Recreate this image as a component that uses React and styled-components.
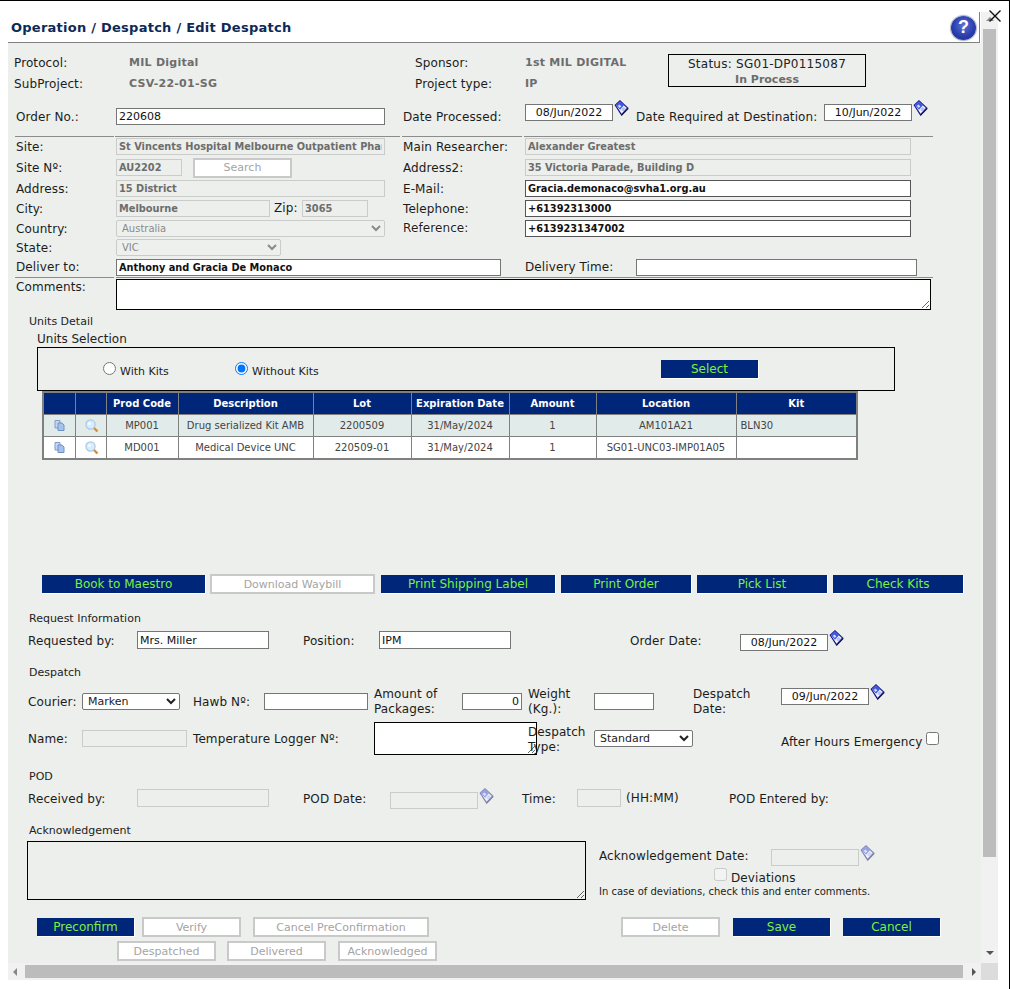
import React from 'react';
import styled, { createGlobalStyle } from 'styled-components';

const GlobalStyle = createGlobalStyle`
  html, body {
    margin: 0;
    padding: 0;
    background: #fff;
  }
  body {
    font-family: "DejaVu Sans", Verdana, sans-serif;
    font-size: 12px;
    color: #1c1c1c;
  }
`;

const NAVY = '#00267a';
const PANEL = '#ecefeb';

const Page = styled.div`
  position: relative;
  box-sizing: border-box;
  width: 1010px;
  height: 989px;
  padding-left: 8px;
  border-top: 1px solid #000;
  border-right: 1px solid #000;
  background: #fff;
  overflow: hidden;
`;

const Frame = styled.div`
  display: grid;
  grid-template-columns: 973px 17px;
  grid-template-rows: 962px 17px;
`;

const Main = styled.div`
  display: flex;
  flex-direction: column;
`;

const Header = styled.header`
  box-sizing: border-box;
  display: flex;
  align-items: center;
  justify-content: space-between;
  position: relative;
  width: 972px;
  height: 42px;
  padding: 12px 4px 0 3px;
  border-bottom: 1px solid #808080;
  &::after {
    content: '';
    position: absolute;
    right: 0;
    top: 11px;
    bottom: 0;
    width: 1px;
    background: #808080;
  }
`;

const Title = styled.h1`
  margin: 0;
  font-size: 13px;
  font-weight: bold;
  letter-spacing: 0.25px;
  color: #0c2a58;
`;

const HelpBadge = styled.div`
  width: 25px;
  height: 24px;
  border-radius: 50%;
  display: flex;
  align-items: center;
  justify-content: center;
  font: bold 18px "Liberation Sans", sans-serif;
  color: #fff;
  background: radial-gradient(circle at 50% 40%, #5c70d8 0%, #2a3fae 55%, #1c2a80 100%);
  box-shadow: 0 0 1px 1px #a9b0c6;
`;

const CloseMark = styled.svg`
  position: absolute;
  top: 9px;
  right: 7px;
  width: 14px;
  height: 12px;
`;

const Panel = styled.main`
  flex: 1;
  background: ${PANEL};
  padding-top: 9px;
`;

const Head = styled.div`
  display: flex;
  align-items: flex-start;
  height: 42px;
`;

const HeadInfo = styled.div`
  width: 660px;
`;

const InfoRow = styled.div`
  display: flex;
  align-items: center;
  height: 21px;
  padding-left: 6px;
`;

const Label = styled.span`
  flex: none;
  width: ${(p) => p.$w || 'auto'}${(p) => (p.$w ? 'px' : '')};
  margin-left: ${(p) => p.$ml || 0}px;
  margin-top: ${(p) => p.$mt || 0}px;
  padding-top: ${(p) => (p.$glow || p.$flat ? 0 : 2)}px;
  font-size: 12px;
  line-height: 15px;
  letter-spacing: 0.1px;
  color: #1c1c1c;
  white-space: ${(p) => (p.$wrap ? 'normal' : 'nowrap')};
  text-shadow: ${(p) => (p.$glow ? '0 0 2px #fff, 0 0 2px #fff, 0 0 1px #fff' : 'none')};
  position: relative;
`;

const Value = styled.span`
  flex: none;
  width: ${(p) => p.$w || 0}px;
  font-size: 11px;
  font-weight: bold;
  letter-spacing: 0.25px;
  color: #6d6d6d;
  white-space: nowrap;
`;

const StatusBox = styled.div`
  box-sizing: border-box;
  width: 198px;
  height: 33px;
  margin-top: 2px;
  padding-top: 1px;
  border: 1px solid #000;
  text-align: center;
  font-size: 12px;
  line-height: 16px;
  letter-spacing: 0.25px;
  color: #222;
  strong {
    display: block;
    margin-top: 1px;
    font-size: 11px;
    line-height: 14px;
    letter-spacing: 0;
    color: #6d6d6d;
  }
`;

const Row = styled.div`
  display: flex;
  align-items: ${(p) => p.$align || 'center'};
  height: ${(p) => p.$h}px;
  margin-top: ${(p) => p.$mt || 0}px;
  padding-left: ${(p) => p.$pl ?? 8}px;
`;

const Cell = styled.div`
  flex: none;
  display: flex;
  align-items: center;
  width: ${(p) => p.$w}px;
`;

const RuleRow = styled.div`
  display: flex;
  margin-top: ${(p) => p.$mt || 0}px;
  padding-left: 7px;
`;

const RuleSeg = styled.div`
  width: ${(p) => p.$w}px;
  margin-left: ${(p) => p.$ml || 0}px;
  height: 1px;
  background: #8c8c8c;
`;

const TextBox = styled.input`
  flex: none;
  box-sizing: border-box;
  width: ${(p) => p.$w}px;
  height: ${(p) => p.$h || 17}px;
  margin: 0 0 0 ${(p) => p.$ml || 0}px;
  padding: 0 2px;
  border: 1px solid ${(p) => p.$edge || '#767676'};
  border-radius: 0;
  outline: none;
  background: #fff;
  font-family: "DejaVu Sans", Verdana, sans-serif;
  font-size: ${(p) => (p.$bold ? 9.8 : 11)}px;
  font-weight: ${(p) => (p.$bold ? 'bold' : 'normal')};
  text-align: ${(p) => p.$align || 'left'};
  color: #111;
  &:disabled {
    background: ${PANEL};
    border-color: #c9ccc8;
    color: #6d6d6d;
  }
`;

const Picker = styled.select`
  flex: none;
  box-sizing: border-box;
  width: ${(p) => p.$w}px;
  height: 17px;
  margin: 0;
  padding: 0 0 0 1px;
  border: 1px solid #767676;
  border-radius: 2px;
  background-color: #fff;
  font-family: "DejaVu Sans", Verdana, sans-serif;
  font-size: 11px;
  color: #222;
  &:disabled {
    background-color: #eef0ed;
    border-color: #c9ccc8;
    font-size: 10px;
    color: #8a8a8a;
    opacity: 1;
  }
`;

const MemoBox = styled.textarea`
  flex: none;
  box-sizing: border-box;
  display: block;
  width: ${(p) => p.$w}px;
  height: ${(p) => p.$h}px;
  margin: ${(p) => p.$mt || 0}px ${(p) => p.$mr || 0}px 0 ${(p) => p.$ml || 0}px;
  padding: 0;
  border: 1px solid #000;
  border-radius: 0;
  outline: none;
  background: #fff;
  &:disabled {
    background: ${PANEL};
  }
`;

const DatePick = styled.div`
  flex: none;
  display: flex;
  align-items: flex-end;
  height: 21px;
  margin-bottom: ${(p) => p.$up || 0}px;
`;

const CalendarIcon = styled.svg`
  align-self: flex-start;
  width: 15px;
  height: 16px;
  margin-left: 1px;
  opacity: ${(p) => (p.$off ? 0.5 : 1)};
`;

const SectionTitle = styled.div`
  margin-top: ${(p) => p.$mt || 0}px;
  padding-left: 21px;
  font-size: 11px;
  line-height: 14px;
  color: #222;
`;

const Legend = styled.div`
  margin: 2px 0 0 29px;
  font-size: 12px;
  line-height: 16px;
  color: #222;
`;

const SelectionBox = styled.div`
  box-sizing: border-box;
  display: flex;
  align-items: center;
  width: 858px;
  height: 44px;
  margin-left: 29px;
  padding-left: 65px;
  border: 1px solid #000;
`;

const RadioWrap = styled.label`
  display: flex;
  align-items: flex-start;
  width: ${(p) => p.$w}px;
  font-size: 11px;
  color: #222;
  input {
    margin: 3px 4px 0 0;
    width: 13px;
    height: 13px;
  }
  span {
    margin-top: 6px;
    line-height: 14px;
  }
`;

const NavyButton = styled.button`
  flex: none;
  box-sizing: border-box;
  width: ${(p) => p.$w}px;
  height: 18px;
  margin: 0 0 0 ${(p) => p.$ml || 0}px;
  padding: 0;
  border: none;
  border-radius: 0;
  background: ${NAVY};
  box-shadow: 1px 1px 0 #fff;
  font-family: "DejaVu Sans", Verdana, sans-serif;
  font-size: 12px;
  color: #7df03c;
`;

const OffButton = styled.button`
  flex: none;
  box-sizing: border-box;
  width: ${(p) => p.$w}px;
  height: 20px;
  margin: 0 0 0 ${(p) => p.$ml || 0}px;
  padding: 0;
  border: 2px solid #c9c9c9;
  border-radius: 0;
  background: #fff;
  font-family: "DejaVu Sans", Verdana, sans-serif;
  font-size: 11px;
  color: #a4a4a4;
`;

const UnitsTable = styled.table`
  box-sizing: border-box;
  table-layout: fixed;
  width: 814px;
  margin: 0 0 0 34px;
  border-collapse: collapse;
  border: 2px solid #808080;
`;

const Th = styled.th`
  height: 21px;
  padding: 0;
  border: 1px solid #808080;
  background: ${NAVY};
  font-size: 10px;
  font-weight: bold;
  color: #fff;
`;

const Td = styled.td`
  height: 21px;
  padding: 0 ${(p) => (p.$left ? '0 0 4px' : '0')};
  border: 1px solid #808080;
  background: ${(p) => (p.$odd ? '#e1ecea' : '#fff')};
  font-size: 10px;
  color: #444;
  text-align: ${(p) => (p.$left ? 'left' : 'center')};
  svg {
    display: inline-block;
    vertical-align: middle;
  }
`;

const LensSvg = styled.svg`
  margin-left: 3px;
`;

const GapCol = styled.col`
  width: ${(p) => p.$w}px;
`;

const AckSide = styled.div`
  flex: none;
  margin-left: 13px;
  display: flex;
  flex-direction: column;
`;

const SmallNote = styled.div`
  height: 14px;
  font-size: 10px;
  line-height: 14px;
  color: #222;
  white-space: nowrap;
`;

const TickBox = styled.input`
  flex: none;
  width: 13px;
  height: 13px;
  margin: ${(p) => p.$mt || 0}px 4px 0 0;
`;

const VScroll = styled.div`
  display: flex;
  flex-direction: column;
  align-items: center;
  margin-top: 11px;
  background: #f1f1f1;
`;

const HScroll = styled.div`
  display: flex;
  align-items: center;
  background: #f1f1f1;
`;

const Corner = styled.div`
  background: #dcdcdc;
`;

const VThumb = styled.div`
  width: 13px;
  height: 828px;
  background: #bcbcbc;
`;

const HThumb = styled.div`
  width: 938px;
  height: 13px;
  margin: 0 9px 0 8px;
  background: #bcbcbc;
`;

const Arrow = styled.i`
  display: block;
  width: 0;
  height: 0;
  border-style: solid;
  border-color: transparent;
  border-width: 4px;
  ${(p) => p.$dir === 'up' && 'border-top-width: 0; border-bottom-color: #888; margin: 5px 0 8px;'}
  ${(p) => p.$dir === 'down' && 'border-bottom-width: 0; border-top-color: #555; margin-top: 94px;'}
  ${(p) => p.$dir === 'left' && 'border-left-width: 0; border-right-color: #888; margin-left: 5px;'}
  ${(p) => p.$dir === 'right' && 'border-right-width: 0; border-left-color: #555;'}
`;

function Calendar({ off }) {
  return (
    <CalendarIcon viewBox="0 0 15 16" $off={off}>
      <path d="M6 0 L14.5 8 L7.5 16 L0.5 5 Z" fill="#16168c" />
      <path d="M6 1.6 L12.8 7.9 L7.6 13.8 L2 5.2 Z" fill="#f2f6ff" />
      <path d="M6 1.6 L10 5.3 L6 9.8 L2 5.2 Z" fill="#3d55e4" />
      <path d="M5.2 4.4 L7.4 6.2 L5.8 8 L3.8 5.9 Z" fill="#cfe0ff" />
      <path d="M7.6 9.8 L10.4 7.2 M8.6 11 L11.2 8.2" stroke="#6d84f0" strokeWidth="0.9" />
      <path d="M7.6 14.4 L14.2 7.8 L14.5 9 L7.6 16 Z" fill="#1a1a3a" />
    </CalendarIcon>
  );
}

function CopyIcon() {
  return (
    <svg width="11" height="11" viewBox="0 0 11 11">
      <path d="M1 0.5 H6 V8 H1 Z" fill="#c6d6ee" stroke="#7f9ccc" />
      <path d="M4 3 H8 L10 5 V10.5 H4 Z" fill="#a6c2ec" stroke="#6f90c6" />
    </svg>
  );
}

function LensIcon() {
  return (
    <LensSvg width="14" height="14" viewBox="0 0 14 14">
      <path d="M8.5 8.5 L12.5 12.5" stroke="#e08a2c" strokeWidth="2.4" />
      <circle cx="5.5" cy="5.5" r="4.6" fill="#d8ecfb" stroke="#a9c9e6" strokeWidth="1.2" />
      <circle cx="4.5" cy="4.5" r="1.6" fill="#f6fbff" />
    </LensSvg>
  );
}

const DateInput = ({ value, off }) => (
  <>
    <TextBox $w={88} $align="center" defaultValue={value} disabled={off} />
    <Calendar off={off} />
  </>
);

const units = [
  { code: 'MP001', desc: 'Drug serialized Kit AMB', lot: '2200509', exp: '31/May/2024', qty: '1', loc: 'AM101A21', kit: 'BLN30' },
  { code: 'MD001', desc: 'Medical Device UNC', lot: '220509-01', exp: '31/May/2024', qty: '1', loc: 'SG01-UNC03-IMP01A05', kit: '' },
];

const columns = [32, 31, 72, 135, 98, 98, 87, 140, 121];

export default function App() {
  return (
    <Page>
      <GlobalStyle />
      <Frame>
        <Main>
          <Header>
            <Title>Operation / Despatch / Edit Despatch</Title>
            <HelpBadge>?</HelpBadge>
          </Header>
          <Panel>
            <Head>
              <HeadInfo>
                <InfoRow>
                  <Label $w={115}>Protocol:</Label>
                  <Value $w={286}>MIL Digital</Value>
                  <Label $w={110}>Sponsor:</Label>
                  <Value $w={143}>1st MIL DIGITAL</Value>
                </InfoRow>
                <InfoRow>
                  <Label $w={115}>SubProject:</Label>
                  <Value $w={286}>CSV-22-01-SG</Value>
                  <Label $w={110}>Project type:</Label>
                  <Value $w={143}>IP</Value>
                </InfoRow>
              </HeadInfo>
              <StatusBox>
                Status: SG01-DP0115087
                <strong>In Process</strong>
              </StatusBox>
            </Head>

            <Row $h={17} $mt={14}>
              <Label $w={100}>Order No.:</Label>
              <TextBox $w={269} defaultValue="220608" />
              <Label $w={122} $ml={18}>Date Processed:</Label>
              <DatePick $up={12}>
                <DateInput value="08/Jun/2022" />
              </DatePick>
              <Label $w={188} $ml={7}>Date Required at Destination:</Label>
              <DatePick $up={12}>
                <DateInput value="10/Jun/2022" />
              </DatePick>
            </Row>

            <RuleRow $mt={11}>
              <RuleSeg $w={99} />
              <RuleSeg $w={285} $ml={1} />
              <RuleSeg $w={120} $ml={2} />
              <RuleSeg $w={409} $ml={2} />
            </RuleRow>

            <Row $h={19}>
              <Label $w={100}>Site:</Label>
              <Cell $w={287}>
                <TextBox $w={269} $bold disabled defaultValue="St Vincents Hospital Melbourne Outpatient Pharmacy" />
              </Cell>
              <Label $w={122}>Main Researcher:</Label>
              <TextBox $w={386} $bold disabled defaultValue="Alexander Greatest" />
            </Row>
            <Row $h={23}>
              <Label $w={100}>Site Nº:</Label>
              <Cell $w={287}>
                <TextBox $w={66} $bold disabled defaultValue="AU2202" />
                <OffButton $w={99} $ml={11}>Search</OffButton>
              </Cell>
              <Label $w={122}>Address2:</Label>
              <TextBox $w={386} $bold disabled defaultValue="35 Victoria Parade, Building D" />
            </Row>
            <Row $h={19}>
              <Label $w={100}>Address:</Label>
              <Cell $w={287}>
                <TextBox $w={269} $bold disabled defaultValue="15 District" />
              </Cell>
              <Label $w={122}>E-Mail:</Label>
              <TextBox $w={386} $bold $edge="#555" defaultValue="Gracia.demonaco@svha1.org.au" />
            </Row>
            <Row $h={20}>
              <Label $w={100}>City:</Label>
              <Cell $w={287}>
                <TextBox $w={154} $bold disabled defaultValue="Melbourne" />
                <Label $w={28} $ml={4} $flat>Zip:</Label>
                <TextBox $w={66} $bold disabled defaultValue="3065" />
              </Cell>
              <Label $w={122}>Telephone:</Label>
              <TextBox $w={386} $bold $edge="#555" defaultValue="+61392313000" />
            </Row>
            <Row $h={20}>
              <Label $w={100}>Country:</Label>
              <Cell $w={287}>
                <Picker $w={269} disabled defaultValue="AU">
                  <option value="AU">Australia</option>
                </Picker>
              </Cell>
              <Label $w={122} $glow>Reference:</Label>
              <TextBox $w={386} $bold $edge="#555" defaultValue="+6139231347002" />
            </Row>
            <Row $h={18}>
              <Label $w={100}>State:</Label>
              <Picker $w={165} disabled defaultValue="VIC">
                <option value="VIC">VIC</option>
              </Picker>
            </Row>
            <Row $h={18} $mt={2}>
              <Label $w={100} $flat>Deliver to:</Label>
              <Cell $w={409}>
                <TextBox $w={385} $bold defaultValue="Anthony and Gracia De Monaco" />
              </Cell>
              <Label $w={111} $flat>Delivery Time:</Label>
              <TextBox $w={281} />
            </Row>

            <RuleRow $mt={1}>
              <RuleSeg $w={99} />
              <RuleSeg $w={817} $ml={2} />
            </RuleRow>

            <Row $h={32} $align="flex-start">
              <Label $w={100}>Comments:</Label>
              <MemoBox $w={815} $h={31} $mt={1} />
            </Row>

            <SectionTitle $mt={5}>Units Detail</SectionTitle>
            <Legend>Units Selection</Legend>
            <SelectionBox>
              <RadioWrap $w={132}>
                <input type="radio" name="kits" />
                <span>With Kits</span>
              </RadioWrap>
              <RadioWrap $w={426}>
                <input type="radio" name="kits" defaultChecked />
                <span>Without Kits</span>
              </RadioWrap>
              <NavyButton $w={97}>Select</NavyButton>
            </SelectionBox>

            <UnitsTable>
              <colgroup>
                {columns.map((w, i) => (
                  <GapCol key={i} $w={w} />
                ))}
              </colgroup>
              <thead>
                <tr>
                  <Th />
                  <Th />
                  <Th>Prod Code</Th>
                  <Th>Description</Th>
                  <Th>Lot</Th>
                  <Th>Expiration Date</Th>
                  <Th>Amount</Th>
                  <Th>Location</Th>
                  <Th>Kit</Th>
                </tr>
              </thead>
              <tbody>
                {units.map((u, i) => (
                  <tr key={u.code}>
                    <Td $odd={i === 0}><CopyIcon /></Td>
                    <Td $odd={i === 0}><LensIcon /></Td>
                    <Td $odd={i === 0}>{u.code}</Td>
                    <Td $odd={i === 0}>{u.desc}</Td>
                    <Td $odd={i === 0}>{u.lot}</Td>
                    <Td $odd={i === 0}>{u.exp}</Td>
                    <Td $odd={i === 0}>{u.qty}</Td>
                    <Td $odd={i === 0}>{u.loc}</Td>
                    <Td $odd={i === 0} $left>{u.kit}</Td>
                  </tr>
                ))}
              </tbody>
            </UnitsTable>

            <Row $h={20} $mt={114} $pl={34}>
              <NavyButton $w={163}>Book to Maestro</NavyButton>
              <OffButton $w={165} $ml={5}>Download Waybill</OffButton>
              <NavyButton $w={174} $ml={6}>Print Shipping Label</NavyButton>
              <NavyButton $w={130} $ml={6}>Print Order</NavyButton>
              <NavyButton $w={130} $ml={6}>Pick List</NavyButton>
              <NavyButton $w={130} $ml={6}>Check Kits</NavyButton>
            </Row>

            <SectionTitle $mt={18}>Request Information</SectionTitle>
            <Row $h={18} $mt={5} $pl={20}>
              <Label $w={109}>Requested by:</Label>
              <TextBox $w={132} $h={18} defaultValue="Mrs. Miller" />
              <Label $w={76} $ml={34}>Position:</Label>
              <TextBox $w={132} $h={18} defaultValue="IPM" />
              <Label $w={110} $ml={119}>Order Date:</Label>
              <DatePick>
                <DateInput value="08/Jun/2022" />
              </DatePick>
            </Row>

            <SectionTitle $mt={17}>Despatch</SectionTitle>
            <Row $h={30} $mt={6} $pl={20}>
              <Label $w={54}>Courier:</Label>
              <Picker $w={98} defaultValue="Marken">
                <option>Marken</option>
              </Picker>
              <Label $w={71} $ml={13}>Hawb Nº:</Label>
              <TextBox $w={104} />
              <Label $w={88} $ml={6} $wrap>Amount of Packages:</Label>
              <TextBox $w={60} $align="right" defaultValue="0" />
              <Label $w={66} $ml={6} $wrap>Weight (Kg.):</Label>
              <TextBox $w={60} />
              <Label $w={88} $ml={39} $wrap>Despatch Date:</Label>
              <DatePick $up={13}>
                <DateInput value="09/Jun/2022" />
              </DatePick>
            </Row>
            <Row $h={33} $mt={6} $pl={20}>
              <Label $w={54}>Name:</Label>
              <TextBox $w={105} disabled />
              <Label $w={181} $ml={6}>Temperature Logger Nº:</Label>
              <MemoBox $w={163} $h={33} $mr={-9} />
              <Label $w={66} $wrap>Despatch Type:</Label>
              <Picker $w={99} defaultValue="Standard">
                <option>Standard</option>
              </Picker>
              <Label $w={145} $ml={88} $mt={5}>After Hours Emergency</Label>
              <TickBox type="checkbox" />
            </Row>

            <SectionTitle $mt={15}>POD</SectionTitle>
            <Row $h={18} $mt={5} $pl={20}>
              <Label $w={109}>Received by:</Label>
              <TextBox $w={132} $h={18} disabled />
              <Label $w={87} $ml={34}>POD Date:</Label>
              <DatePick>
                <DateInput off />
              </DatePick>
              <Label $w={55} $ml={28}>Time:</Label>
              <TextBox $w={44} $h={18} disabled />
              <Label $w={103} $ml={5} $flat>(HH:MM)</Label>
              <Label>POD Entered by:</Label>
            </Row>

            <SectionTitle $mt={17}>Acknowledgement</SectionTitle>
            <Row $h={59} $mt={3} $pl={19} $align="flex-start">
              <MemoBox $w={559} $h={59} disabled />
              <AckSide>
                <Row $h={28} $pl={0}>
                  <Label $w={172}>Acknowledgement Date:</Label>
                  <DatePick>
                    <DateInput off />
                  </DatePick>
                </Row>
                <Row $h={16} $pl={115} $align="flex-start">
                  <TickBox type="checkbox" disabled $mt={-1} />
                  <Label>Deviations</Label>
                </Row>
                <SmallNote>In case of deviations, check this and enter comments.</SmallNote>
              </AckSide>
            </Row>

            <Row $h={20} $mt={17} $pl={29}>
              <NavyButton $w={97}>Preconfirm</NavyButton>
              <OffButton $w={99} $ml={8}>Verify</OffButton>
              <OffButton $w={176} $ml={12}>Cancel PreConfirmation</OffButton>
              <OffButton $w={99} $ml={192}>Delete</OffButton>
              <NavyButton $w={97} $ml={13}>Save</NavyButton>
              <NavyButton $w={97} $ml={13}>Cancel</NavyButton>
            </Row>
            <Row $h={20} $mt={4} $pl={109}>
              <OffButton $w={99}>Despatched</OffButton>
              <OffButton $w={99} $ml={11}>Delivered</OffButton>
              <OffButton $w={99} $ml={12}>Acknowledged</OffButton>
            </Row>
          </Panel>
        </Main>

        <VScroll>
          <Arrow $dir="up" />
          <VThumb />
          <Arrow $dir="down" />
        </VScroll>
        <HScroll>
          <Arrow $dir="left" />
          <HThumb />
          <Arrow $dir="right" />
        </HScroll>
        <Corner />
      </Frame>
      <CloseMark viewBox="0 0 14 12">
        <path d="M1.5 0.5 L12.5 11.5 M12.5 0.5 L1.5 11.5" stroke="#111" strokeWidth="1.4" fill="none" />
      </CloseMark>
    </Page>
  );
}
